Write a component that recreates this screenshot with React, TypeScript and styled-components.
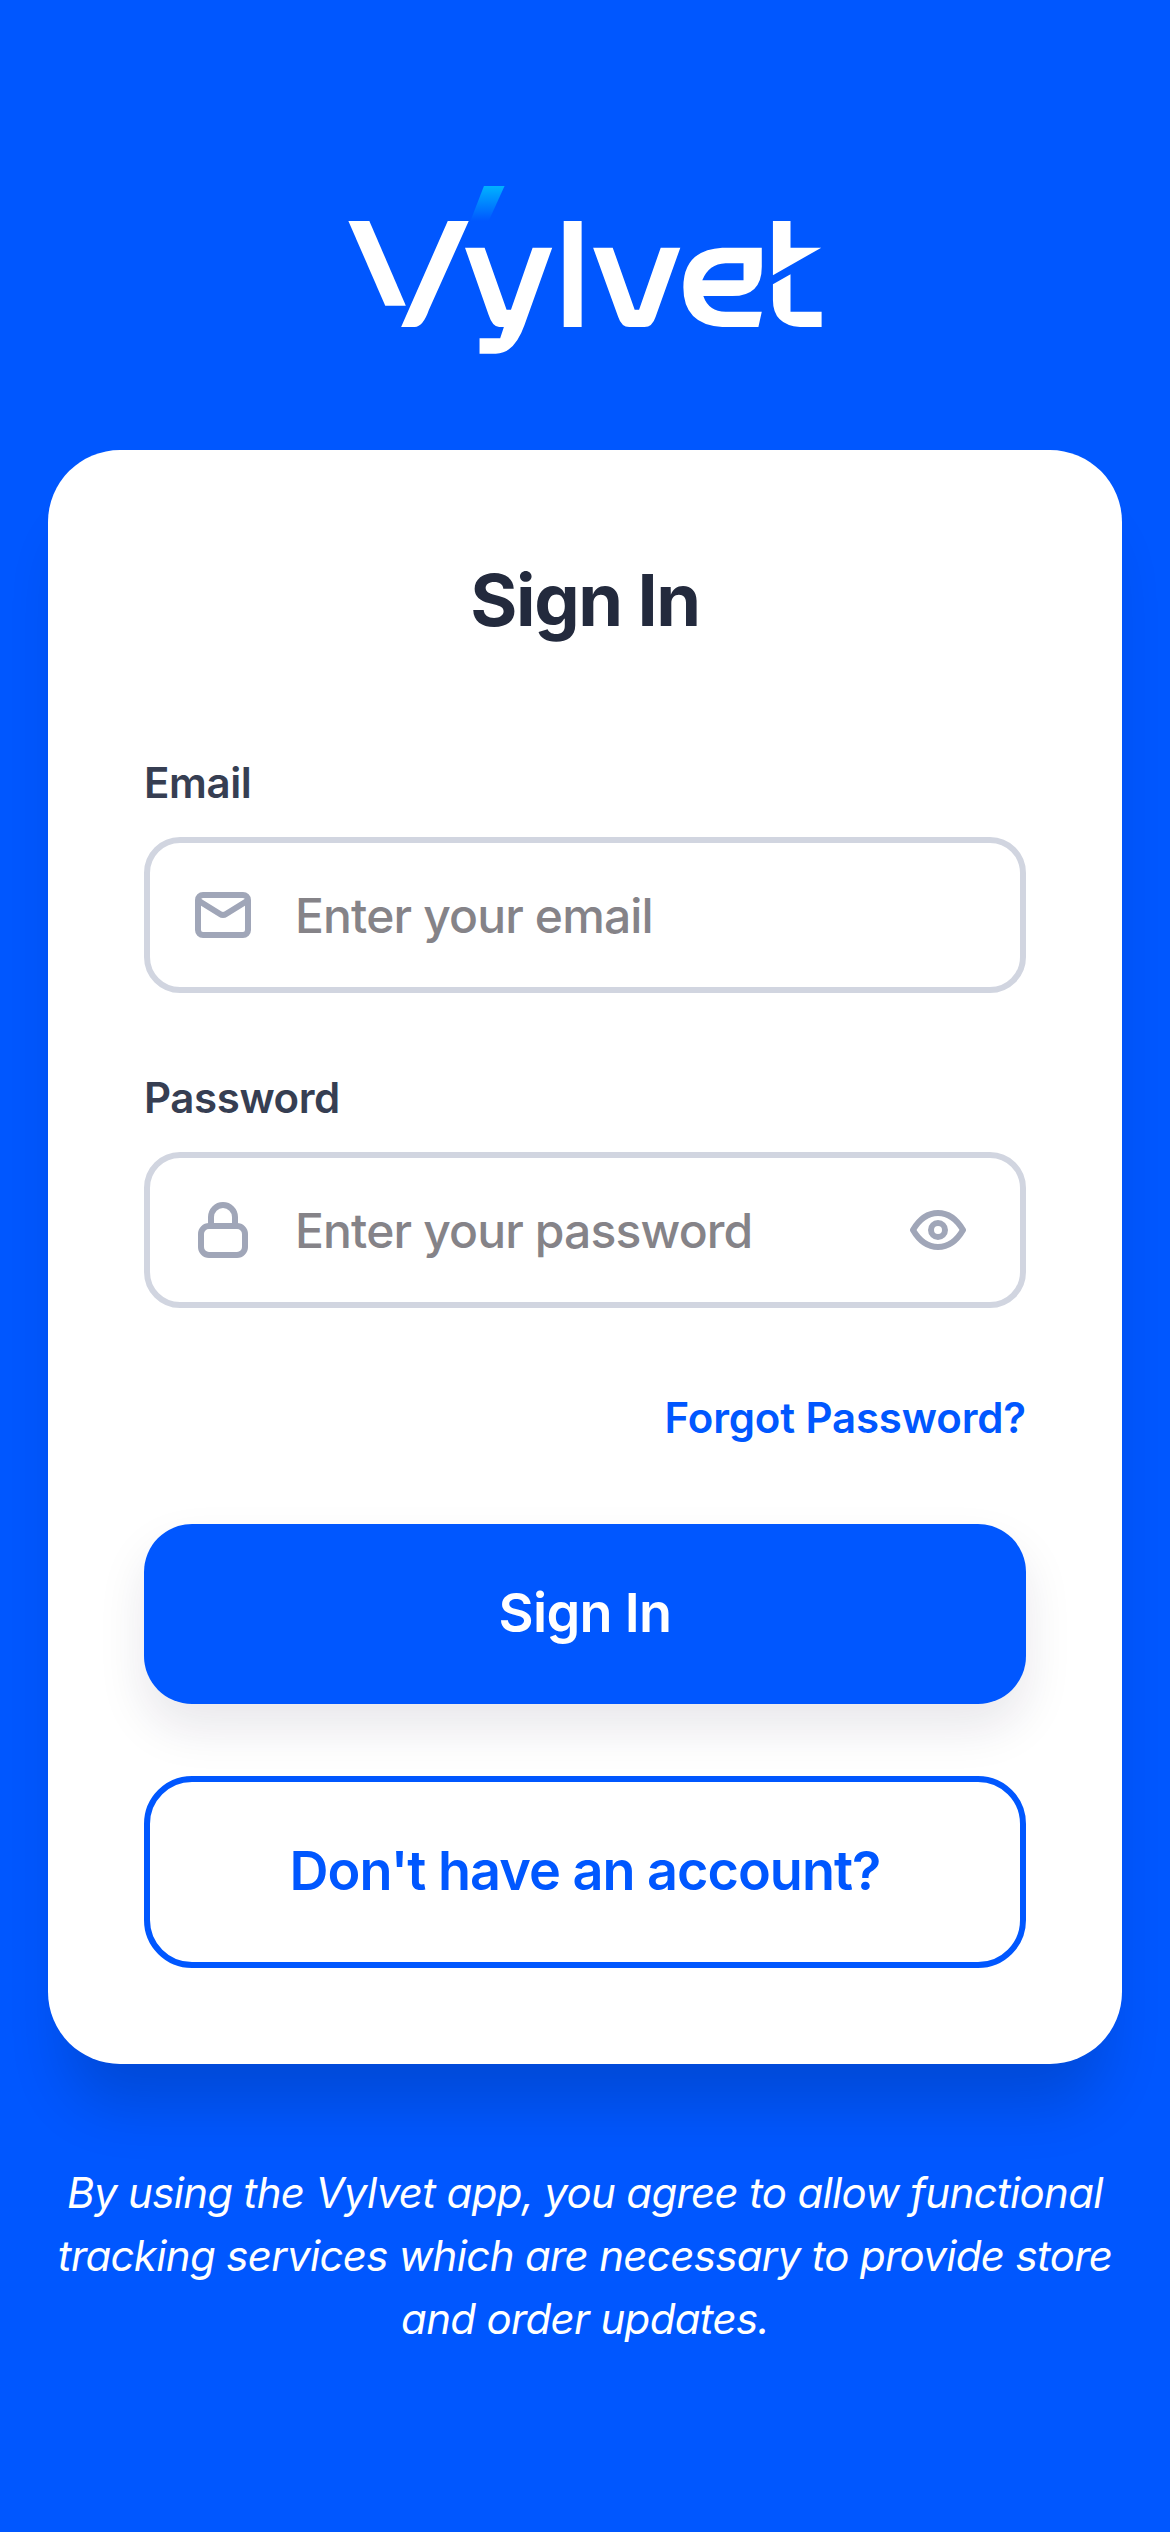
import styled, { createGlobalStyle } from 'styled-components'

const BLUE = '#0057ff'

const GlobalStyle = createGlobalStyle`
  html, body {
    margin: 0;
    padding: 0;
    background: ${BLUE};
  }
  * {
    box-sizing: border-box;
  }
`

const Logo = () => (
  <LogoSvg viewBox="0 0 1568 630" preserveAspectRatio="none" aria-label="Vylvet">
    <defs>
      <linearGradient id="tick" x1="0" y1="0" x2="0" y2="1">
        <stop offset="0" stopColor="#00b2ff" />
        <stop offset="1" stopColor="#00b2ff" stopOpacity="0" />
      </linearGradient>
    </defs>
    <path fill="url(#tick)" d="M485 78 L546 78 L499 183 L445 183 Z" />
    <g fill="#fff">
      <path d="M84 183 L146 183 L254 437 L193 437 Z" />
      <path d="M378 183 L440 183 L322 450 Q305 500 280 501 L240 501 Z" />
      <path d="M429 263 L487 263 L552 449 L565 449 L629 263 L687 263 L605 495 Q575 581 520 581 L472 581 L472 535 L533 535 L544 501 L530 501 Q510 500 499 465 Z" />
      <rect x="721" y="183" width="53" height="318" />
      <path d="M808 263 L866 263 L931 449 L944 449 L1008 263 L1066 263 L993 470 Q983 501 960 501 L915 501 Q892 501 882 470 Z" />
      <path
        fillRule="evenodd"
        d="M1190 263 L1307 263 L1307 320 Q1307 408 1220 408 L1134 408 Q1150 455 1200 455 L1307 455 L1297 501 L1190 501 Q1075 495 1075 382 Q1075 270 1190 263 Z M1131 361 L1253 361 L1253 310 L1200 310 Q1150 312 1131 361 Z"
      />
      <path d="M1340 183 L1392 183 L1392 263 L1483 263 L1340 346 Z" />
      <path d="M1392 343 L1392 455 L1484 455 L1484 501 L1420 501 Q1340 495 1340 420 L1340 373 Z" />
    </g>
  </LogoSvg>
)

const MailIcon = () => (
  <FieldIcon width="56" height="46" viewBox="0 0 56 46">
    <rect x="3" y="3" width="50" height="40" rx="5" />
    <path d="M4 9 L25 22 Q28 24 31 22 L52 9" />
  </FieldIcon>
)

const LockIcon = () => (
  <FieldIcon width="50" height="56" viewBox="0 0 50 56">
    <rect x="3" y="24" width="44" height="29" rx="8" />
    <path d="M13 24 V15 A12 12 0 0 1 37 15 V24" />
  </FieldIcon>
)

const EyeIcon = () => (
  <FieldIcon width="56" height="40" viewBox="0 0 56 40">
    <path d="M3 20 C10 8 18 3 28 3 C38 3 46 8 53 20 C46 32 38 37 28 37 C18 37 10 32 3 20 Z" />
    <circle cx="28" cy="20" r="7" />
  </FieldIcon>
)

const App = () => {
  return (
    <Page>
      <GlobalStyle />
      <Logo />
      <Card>
        <Title>Sign In</Title>
        <Field>
          <Label>Email</Label>
          <InputBox>
            <IconSlot>
              <MailIcon />
            </IconSlot>
            <Input placeholder="Enter your email" />
          </InputBox>
        </Field>
        <Field>
          <Label>Password</Label>
          <InputBox>
            <IconSlot>
              <LockIcon />
            </IconSlot>
            <Input placeholder="Enter your password" />
            <EyeSlot>
              <EyeIcon />
            </EyeSlot>
          </InputBox>
        </Field>
        <ForgotRow>
          <ForgotLink>Forgot Password?</ForgotLink>
        </ForgotRow>
        <PrimaryButton>Sign In</PrimaryButton>
        <OutlineButton>Don't have an account?</OutlineButton>
      </Card>
      <Notice>
        By using the Vylvet app, you agree to allow functional tracking services which are necessary to provide store and
        order updates.
      </Notice>
    </Page>
  )
}

export default App

const Page = styled.div`
  display: flex;
  flex-direction: column;
  align-items: center;
  width: 1170px;
  height: 2532px;
  padding: 160px 48px 0;
  overflow: hidden;
  background: ${BLUE};
  font-family: Inter, 'Liberation Sans', sans-serif;
`
const LogoSvg = styled.svg`
  display: block;
  flex: none;
  width: 530px;
  height: 210px;
  margin-bottom: 80px;
`
const Card = styled.main`
  display: flex;
  flex-direction: column;
  width: 1074px;
  height: 1614px;
  padding: 96px 96px 0;
  border-radius: 72px;
  background: #fff;
  box-shadow: 0 60px 60px -20px rgba(0, 0, 0, 0.16);
`
const Title = styled.h1`
  margin: 0 0 97px;
  color: #232a3d;
  font-size: 72px;
  font-weight: 700;
  line-height: 108px;
  letter-spacing: -1.4px;
  text-align: center;
`
const Field = styled.div`
  display: flex;
  flex-direction: column;
  gap: 23px;
  margin-bottom: 73px;
`
const Label = styled.label`
  color: #363e52;
  font-size: 42px;
  font-weight: 600;
  line-height: 63px;
  letter-spacing: -0.4px;
`
const InputBox = styled.div`
  display: flex;
  align-items: center;
  height: 156px;
  padding: 0 54px 0 45px;
  border: 6px solid #d1d5e0;
  border-radius: 36px;
  background: #fff;
`
const IconSlot = styled.div`
  display: flex;
  flex: none;
  justify-content: center;
  width: 56px;
  margin-right: 44px;
`
const EyeSlot = styled.div`
  display: flex;
  flex: none;
`
const FieldIcon = styled.svg`
  display: block;
  fill: none;
  stroke: #a0a6b8;
  stroke-width: 6;
  stroke-linecap: round;
  stroke-linejoin: round;
`
const Input = styled.input`
  flex: 1;
  min-width: 0;
  padding: 0;
  border: none;
  outline: none;
  background: transparent;
  color: #232a3d;
  font-family: inherit;
  font-size: 48px;
  font-weight: 500;
  letter-spacing: -0.85px;
  &::placeholder {
    color: #858388;
    opacity: 1;
  }
`
const ForgotRow = styled.div`
  display: flex;
  justify-content: flex-end;
  margin-top: 5px;
  margin-bottom: 75px;
`
const ForgotLink = styled.a`
  color: ${BLUE};
  font-size: 42px;
  font-weight: 600;
  line-height: 63px;
  letter-spacing: -0.15px;
`
const PrimaryButton = styled.button`
  flex: none;
  width: 100%;
  height: 180px;
  margin-bottom: 72px;
  padding: 0 0 3px;
  border: none;
  border-radius: 48px;
  background: ${BLUE};
  box-shadow: 0 24px 48px rgba(30, 20, 60, 0.1);
  color: #fff;
  font-family: inherit;
  font-size: 54px;
  font-weight: 600;
  letter-spacing: -0.7px;
`
const OutlineButton = styled.button`
  flex: none;
  width: 100%;
  height: 192px;
  padding: 0 0 3px;
  border: 6px solid ${BLUE};
  border-radius: 48px;
  background: #fff;
  color: ${BLUE};
  font-family: inherit;
  font-size: 54px;
  font-weight: 600;
  letter-spacing: -1px;
`
const Notice = styled.p`
  width: 1074px;
  margin: 97px 0 0;
  color: #fff;
  font-size: 42px;
  font-style: italic;
  font-weight: 400;
  line-height: 63px;
  letter-spacing: -0.67px;
  text-align: center;
`
